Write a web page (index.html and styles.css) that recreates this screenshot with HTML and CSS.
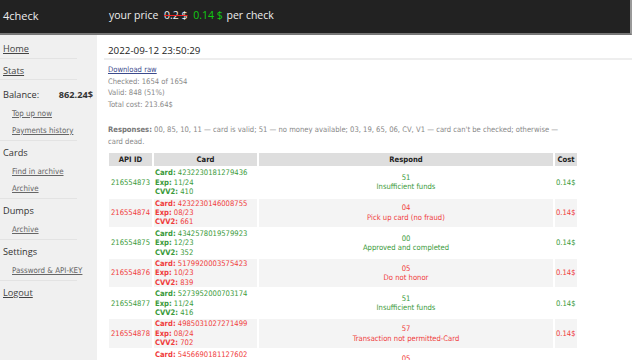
FILE: index.html
```html
<!DOCTYPE html>
<html lang="en">
<head>
    <meta charset="UTF-8">
    <meta name="viewport" content="width=device-width, initial-scale=1.0">
    <title>4check - Check 216554873</title>
    <link rel="stylesheet" href="styles.css">
</head>
<body>

    <header class="topbar">
        <span class="brand">4check</span>
        <span class="price">your price <s class="price-old">0.2 $</s> <span class="price-new">0.14 $</span> per check</span>
    </header>

    <div class="layout">
        <nav class="sidebar">
            <div class="nav-block">
                <a class="nav-title" href="#">Home</a>
            </div>
            <div class="nav-block">
                <a class="nav-title" href="#">Stats</a>
            </div>
            <div class="nav-block balance-block">
                <div class="nav-title balance"><span>Balance:</span><b>862.24$</b></div>
                <a class="sub-link" href="#">Top up now</a>
                <a class="sub-link" href="#">Payments history</a>
            </div>
            <div class="nav-block">
                <div class="nav-title">Cards</div>
                <a class="sub-link" href="#">Find in archive</a>
                <a class="sub-link" href="#">Archive</a>
            </div>
            <div class="nav-block">
                <div class="nav-title">Dumps</div>
                <a class="sub-link" href="#">Archive</a>
            </div>
            <div class="nav-block">
                <div class="nav-title">Settings</div>
                <a class="sub-link" href="#">Password &amp; API-KEY</a>
            </div>
            <div class="nav-block last">
                <a class="nav-title" href="#">Logout</a>
            </div>
        </nav>

        <main class="content">
            <h1 class="check-date">2022-09-12 23:50:29</h1>

            <div class="summary">
                <a class="download" href="#">Download raw</a><br>
                Checked: 1654 of 1654<br>
                Valid: 848 (51%)<br>
                Total cost: 213.64$
            </div>

            <p class="legend"><b>Responses:</b> 00, 85, 10, 11 &mdash; card is valid; 51 &mdash; no money available; 03, 19, 65, 06, CV, V1 &mdash; card can't be checked; otherwise &mdash; card dead.</p>

            <table class="results">
                <thead>
                    <tr>
                        <th class="col-id">API ID</th>
                        <th class="col-card">Card</th>
                        <th class="col-respond">Respond</th>
                        <th class="col-cost">Cost</th>
                    </tr>
                </thead>
                <tbody>
                    <tr class="ok">
                        <td class="col-id">216554873</td>
                        <td class="col-card"><b>Card:</b> 4232230181279436<br><b>Exp:</b> 11/24<br><b>CVV2:</b> 410</td>
                        <td class="col-respond">51<br>Insufficient funds</td>
                        <td class="col-cost">0.14$</td>
                    </tr>
                    <tr class="dead">
                        <td class="col-id">216554874</td>
                        <td class="col-card"><b>Card:</b> 4232230146008755<br><b>Exp:</b> 08/23<br><b>CVV2:</b> 661</td>
                        <td class="col-respond">04<br>Pick up card (no fraud)</td>
                        <td class="col-cost">0.14$</td>
                    </tr>
                    <tr class="ok">
                        <td class="col-id">216554875</td>
                        <td class="col-card"><b>Card:</b> 4342578019579923<br><b>Exp:</b> 12/23<br><b>CVV2:</b> 352</td>
                        <td class="col-respond">00<br>Approved and completed</td>
                        <td class="col-cost">0.14$</td>
                    </tr>
                    <tr class="dead">
                        <td class="col-id">216554876</td>
                        <td class="col-card"><b>Card:</b> 5179920003575423<br><b>Exp:</b> 10/23<br><b>CVV2:</b> 839</td>
                        <td class="col-respond">05<br>Do not honor</td>
                        <td class="col-cost">0.14$</td>
                    </tr>
                    <tr class="ok">
                        <td class="col-id">216554877</td>
                        <td class="col-card"><b>Card:</b> 5273952000703174<br><b>Exp:</b> 11/24<br><b>CVV2:</b> 416</td>
                        <td class="col-respond">51<br>Insufficient funds</td>
                        <td class="col-cost">0.14$</td>
                    </tr>
                    <tr class="dead">
                        <td class="col-id">216554878</td>
                        <td class="col-card"><b>Card:</b> 4985031027271499<br><b>Exp:</b> 08/24<br><b>CVV2:</b> 702</td>
                        <td class="col-respond">57<br>Transaction not permitted-Card</td>
                        <td class="col-cost">0.14$</td>
                    </tr>
                    <tr class="dead">
                        <td class="col-id">216554879</td>
                        <td class="col-card"><b>Card:</b> 5456690181127602<br><b>Exp:</b> 05/24<br><b>CVV2:</b> 518</td>
                        <td class="col-respond">05<br>Do not honor</td>
                        <td class="col-cost">0.14$</td>
                    </tr>
                </tbody>
            </table>
        </main>
    </div>

</body>
</html>
```

FILE: styles.css
```css
body {
    margin: 0;
    padding: 0;
    font-family: 'Open Sans', 'Noto Sans', sans-serif;
    background: #fff;
    color: #333;
}

/* top bar */
.topbar {
    display: flex;
    align-items: center;
    height: 35px;
    padding-bottom: 3px;
    box-sizing: border-box;
    margin-right: 8px;
    background: #222;
    border-bottom: 2px solid #777;
    border-right: 2px solid #999;
    color: #eee;
    font-size: 10.5px;
}

.brand {
    width: 106px;
    padding-left: 3px;
    font-size: 11px;
}

.price-old {
    text-decoration-color: #e22;
    margin: 0 3px;
}

.price-new {
    color: #1c1;
    margin-right: 1px;
}

/* layout */
.layout {
    display: flex;
    min-height: 325px;
}

.sidebar {
    width: 97px;
    flex-shrink: 0;
    padding-top: 2px;
    background: #f0f0f0;
}

.nav-block {
    width: 77px;
    box-sizing: border-box;
    padding: 5px 0 1.5px 3px;
    border-bottom: 1px solid #e3e3e3;
}

.nav-block.balance-block {
    padding-top: 8px;
}

.nav-block.last {
    border-bottom: none;
}

.nav-title {
    display: block;
    line-height: 14px;
    font-size: 9.2px;
    color: #333;
}

a.nav-title {
    color: #444;
}

.balance {
    display: flex;
    justify-content: space-between;
    width: 90px;
}

.nav-block .nav-title + .sub-link {
    margin-top: 2.5px;
}

.sub-link {
    display: block;
    padding-left: 9px;
    line-height: 17px;
    white-space: nowrap;
    font-family: 'DejaVu Sans Condensed', 'DejaVu Sans', sans-serif;
    font-size: 7.9px;
    color: #666;
}

/* main content */
.content {
    flex: 1;
    padding-left: 7px;
    padding-right: 8px;
    font-family: 'DejaVu Sans Condensed', 'DejaVu Sans', sans-serif;
    font-size: 7.6px;
    color: #888;
}

.check-date {
    margin: 0;
    padding: 9px 4px 0;
    line-height: 14px;
    font-family: 'Open Sans', 'Noto Sans', sans-serif;
    font-size: 9.8px;
    font-weight: normal;
    color: #222;
    border-bottom: 2px solid #eee;
}

.summary {
    margin-top: 4px;
    padding-left: 4px;
    line-height: 11.6px;
}

.download {
    color: #3b4a8c;
}

.legend {
    margin: 14px 0 0;
    padding-left: 4px;
    width: 458px;
    line-height: 12px;
}

.legend b {
    color: #777;
}

/* results table */
.results {
    margin-top: 3px;
    margin-left: 3px;
    width: 472px;
    table-layout: fixed;
    border-spacing: 2px;
    line-height: 9.4px;
}

.results th {
    height: 13px;
    padding: 0;
    background: #dedede;
    color: #222;
    font-weight: bold;
}

.results td {
    padding: 0 1px;
    vertical-align: middle;
    white-space: nowrap;
}

.results tbody tr:nth-child(even) td {
    background: #f4f4f4;
}

.col-id {
    width: 43px;
    text-align: center;
}

.col-card {
    width: 103px;
    text-align: left;
}

.results th.col-card,
.col-respond {
    text-align: center;
}

.col-cost {
    width: 22px;
}

tr.ok td {
    color: #3a9a3a;
}

tr.dead td {
    color: #f03c3c;
}
```
